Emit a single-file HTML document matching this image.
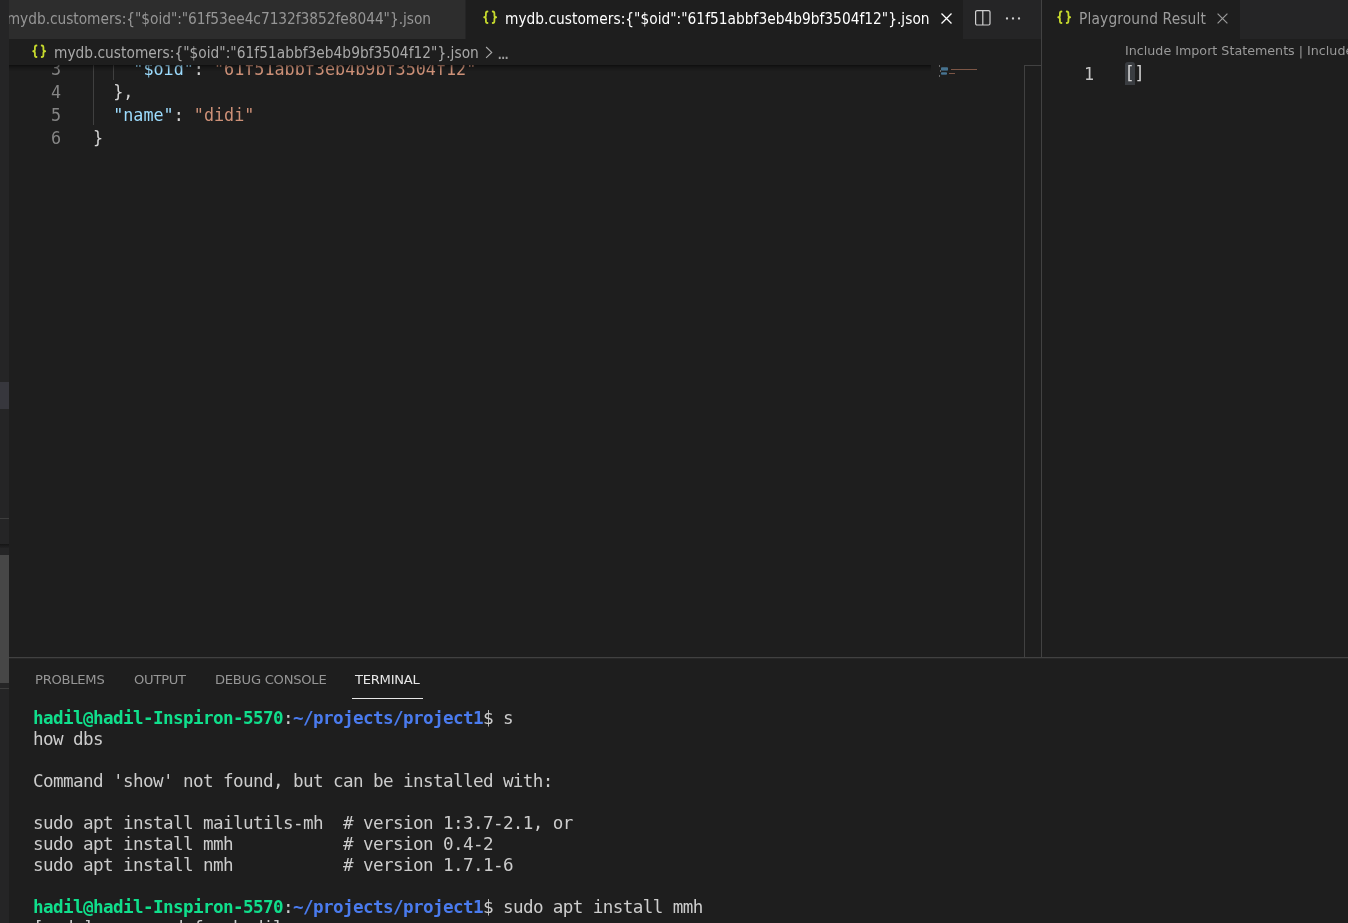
<!DOCTYPE html>
<html lang="en">
<head>
<meta charset="utf-8">
<title>mydb.customers - Visual Studio Code</title>
<style>
*{box-sizing:border-box;margin:0;padding:0}
html,body{width:1348px;height:923px;overflow:hidden;background:#1e1e1e}
body{position:relative;font-family:"DejaVu Sans Condensed","DejaVu Sans","Liberation Sans",sans-serif;font-stretch:condensed;font-size:15.3px;color:#ccc;-webkit-font-smoothing:antialiased}
.abs{position:absolute}
#root{position:absolute;left:0;top:0;width:1348px;height:923px;overflow:hidden;will-change:transform}
.ui{font-family:"DejaVu Sans Condensed","DejaVu Sans","Liberation Sans",sans-serif;font-stretch:condensed;white-space:pre}
.mono{font-family:"DejaVu Sans Mono","Liberation Mono",monospace;font-stretch:normal;white-space:pre}

/* sidebar sliver */
#side{left:0;top:0;width:9px;height:923px;background:#252526}
#side .sel{left:0;top:382px;width:9px;height:27px;background:#37373d}
#side .ln1{left:0;top:518px;width:9px;height:1px;background:#3d3d3d}
#side .shadow{left:0;top:544px;width:9px;height:4px;background:linear-gradient(#161616,#222223)}
#side .slider{left:0;top:555px;width:9px;height:128px;background:#474747}
#side .ln2{left:0;top:688px;width:9px;height:1px;background:#3d3d3d}

/* tabs group 1 */
#tabs1{left:9px;top:0;width:1032px;height:39px;background:#252526;overflow:hidden}
#tab1{left:0;top:0;width:456px;height:39px;background:#2d2d2d;overflow:hidden}
#tab1 .lbl{right:34px;top:1px;line-height:37px;color:#969696;letter-spacing:-0.032px}
#tab2{left:457px;top:0;width:497px;height:39px;background:#1e1e1e}
#tab2 .lbl{left:39px;top:1px;line-height:37px;color:#fff;letter-spacing:0.02px}
.brace{color:#cbcb41;font-weight:bold;font-stretch:normal;font-family:"DejaVu Sans Mono","Liberation Mono",monospace;white-space:pre}

/* breadcrumbs */
#crumbs{left:9px;top:39px;width:1032px;height:26px;background:#1e1e1e}
#crumbs .lbl{left:45px;top:1px;line-height:26px;color:#a9a9a9;letter-spacing:0.025px}

/* editor 1 */
#ed1{left:9px;top:65px;width:1015px;height:592px;background:#1e1e1e;overflow:hidden}
#ed1 .shadow{left:0;top:0;width:922px;height:6px;box-shadow:#000 0 6px 6px -6px inset;z-index:5}
.line{left:0;height:23px;line-height:23px;font-size:16.75px}
.num{position:absolute;left:0;width:52px;text-align:right;color:#858585}
.code{position:absolute;left:84px;color:#d4d4d4}
.k{color:#9cdcfe}.s{color:#ce9178}
.guide{width:1px;background:#404040}

#scroll1{left:1024px;top:65px;width:17px;height:592px;border-left:1px solid #414141;border-top:1px solid #414141}
#vsep{left:1041px;top:0;width:1px;height:657px;background:#424242}

/* group 2 */
#tabs2{left:1042px;top:0;width:306px;height:39px;background:#252526}
#tab3{left:0;top:0;width:198px;height:39px;background:#1e1e1e}
#tab3 .lbl{left:37px;top:1px;line-height:37px;color:#9d9d9d;letter-spacing:0.17px}
#lens{left:1125px;top:41.6px;font-family:"DejaVu Sans","Liberation Sans",sans-serif;font-stretch:normal;font-size:12.7px;line-height:18px;color:#999}

/* panel */
#panel{left:9px;top:657px;width:1339px;height:266px;border-top:1px solid #414141;box-shadow:inset 0 1px 0 #272727;background:#1e1e1e;overflow:hidden}
.ptab{top:12.5px;font-family:"DejaVu Sans","Liberation Sans",sans-serif;font-stretch:normal;font-size:13.1px;letter-spacing:-0.25px;line-height:18px;color:#969696}
.ptab.on{color:#e7e7e7}
#punder{left:343px;top:40px;width:71px;height:1px;background:#e7e7e7}
#term{left:24px;top:50px;font-size:17.6px;line-height:21px;color:#ccc;letter-spacing:-0.595px}
#term b{color:#10df8c;font-weight:bold}
#term .bl{color:#4a7bee;font-weight:bold}
</style>
</head>
<body>
<div id="root">

<div id="side" class="abs">
  <div class="abs sel"></div>
  <div class="abs ln1"></div>
  <div class="abs shadow"></div>
  <div class="abs slider"></div>
  <div class="abs ln2"></div>
</div>

<div id="tabs1" class="abs">
  <div id="tab1" class="abs"><span class="abs lbl ui" id="t1">mydb.customers:{"$oid":"61f53ee4c7132f3852fe8044"}.json</span></div>
  <div id="tab2" class="abs">
    <svg class="abs" id="b2" style="left:16px;top:10px" width="16" height="15" viewBox="0 0 16 15"><path d="M5.5 1.5 C3.9 1.5 3.9 2.6 3.9 3.6 V5.6 C3.9 6.6 3.4 7.25 2.2 7.25 C3.4 7.25 3.9 7.9 3.9 8.9 V10.9 C3.9 11.9 3.9 13 5.5 13 M10.7 1.5 C12.4 1.5 12.4 2.6 12.4 3.6 V5.6 C12.4 6.6 12.9 7.25 14.2 7.25 C12.9 7.25 12.4 7.9 12.4 8.9 V10.9 C12.4 11.9 12.4 13 10.7 13" fill="none" stroke="#c6d92d" stroke-width="1.8" stroke-linecap="round" stroke-linejoin="round"/></svg>
    <span class="abs lbl ui" id="t2">mydb.customers:{"$oid":"61f51abbf3eb4b9bf3504f12"}.json</span>
    <svg class="abs" style="left:474px;top:12px" width="13" height="13" viewBox="0 0 13 13"><path d="M1.5 1.5 L11.5 11.5 M11.5 1.5 L1.5 11.5" stroke="#fff" stroke-width="1.3" fill="none"/></svg>
  </div>
  <svg class="abs" style="left:965px;top:9px" width="18" height="18" viewBox="0 0 18 18"><rect x="1.6" y="1.6" width="14.4" height="14.4" rx="1.5" fill="none" stroke="#d0d0d0" stroke-width="1.2"/><path d="M8.8 1.6 V16" stroke="#d0d0d0" stroke-width="1.2"/></svg>
  <svg class="abs" style="left:995px;top:14px" width="18" height="8" viewBox="0 0 18 8"><circle cx="3" cy="4.5" r="1.15" fill="#d0d0d0"/><circle cx="9" cy="4.5" r="1.15" fill="#d0d0d0"/><circle cx="15" cy="4.5" r="1.15" fill="#d0d0d0"/></svg>
</div>

<div id="crumbs" class="abs">
  <svg class="abs" id="b1" style="left:22px;top:5.2px" width="16" height="15" viewBox="0 0 16 15"><path d="M5.5 1.5 C3.9 1.5 3.9 2.6 3.9 3.6 V5.6 C3.9 6.6 3.4 7.25 2.2 7.25 C3.4 7.25 3.9 7.9 3.9 8.9 V10.9 C3.9 11.9 3.9 13 5.5 13 M10.7 1.5 C12.4 1.5 12.4 2.6 12.4 3.6 V5.6 C12.4 6.6 12.9 7.25 14.2 7.25 C12.9 7.25 12.4 7.9 12.4 8.9 V10.9 C12.4 11.9 12.4 13 10.7 13" fill="none" stroke="#c6d92d" stroke-width="1.8" stroke-linecap="round" stroke-linejoin="round"/></svg>
  <span class="abs lbl ui" id="c1">mydb.customers:{"$oid":"61f51abbf3eb4b9bf3504f12"}.json</span>
  <svg class="abs" style="left:475px;top:6px" width="10" height="15" viewBox="0 0 10 15"><path d="M2.1 2 L7.7 7.4 L2.1 12.8" stroke="#a9a9a9" stroke-width="1.15" fill="none"/></svg>
  <span class="abs ui" style="left:489px;top:3px;line-height:26px;font-size:12.5px;color:#a0a0a0;font-weight:bold;transform:scaleX(0.92);transform-origin:0 50%">…</span>
</div>

<div id="ed1" class="abs">
  <div class="abs shadow"></div>
  <div class="abs guide" style="left:84px;top:0;height:60px"></div>
  <div class="abs guide" style="left:104px;top:0;height:15px"></div>
  <div class="abs line mono" style="top:-7px"><span class="num">3</span><span class="code">    <span class="k">"$oid"</span>: <span class="s">"61f51abbf3eb4b9bf3504f12"</span></span></div>
  <div class="abs line mono" style="top:16px"><span class="num">4</span><span class="code">  },</span></div>
  <div class="abs line mono" style="top:39px"><span class="num">5</span><span class="code">  <span class="k">"name"</span>: <span class="s">"didi"</span></span></div>
  <div class="abs line mono" style="top:62px"><span class="num">6</span><span class="code">}</span></div>
  <!-- minimap -->
  <div class="abs" style="left:930px;top:0;width:40px;height:14px">
    <div class="abs" style="left:0;top:0;width:1px;height:2px;background:#6a6a6a"></div>
    <div class="abs" style="left:2px;top:2px;width:7px;height:4px;background:linear-gradient(#3a5a70,#4f84a6 40%,#4f84a6 60%,#2f4656);border-radius:1px;opacity:.85"></div>
    <div class="abs" style="left:12px;top:4px;width:26px;height:1px;background:#7c5646"></div>
    <div class="abs" style="left:1px;top:5px;width:1px;height:2px;background:#6a6a6a"></div>
    <div class="abs" style="left:2px;top:7px;width:6px;height:3px;background:linear-gradient(#3a5a70,#4f84a6 50%,#35526a);border-radius:1px;opacity:.85"></div>
    <div class="abs" style="left:10px;top:8px;width:6px;height:1px;background:#7c5646"></div>
    <div class="abs" style="left:0;top:10px;width:1px;height:2px;background:#6a6a6a"></div>
  </div>
</div>
<div id="scroll1" class="abs"></div>
<div id="vsep" class="abs"></div>

<div id="tabs2" class="abs">
  <div id="tab3" class="abs">
    <svg class="abs" id="b3" style="left:14px;top:10px" width="16" height="15" viewBox="0 0 16 15"><path d="M5.5 1.5 C3.9 1.5 3.9 2.6 3.9 3.6 V5.6 C3.9 6.6 3.4 7.25 2.2 7.25 C3.4 7.25 3.9 7.9 3.9 8.9 V10.9 C3.9 11.9 3.9 13 5.5 13 M10.7 1.5 C12.4 1.5 12.4 2.6 12.4 3.6 V5.6 C12.4 6.6 12.9 7.25 14.2 7.25 C12.9 7.25 12.4 7.9 12.4 8.9 V10.9 C12.4 11.9 12.4 13 10.7 13" fill="none" stroke="#c6d92d" stroke-width="1.8" stroke-linecap="round" stroke-linejoin="round"/></svg>
    <span class="abs lbl ui" id="t3">Playground Result</span>
    <svg class="abs" style="left:174px;top:12px" width="13" height="13" viewBox="0 0 13 13"><path d="M1.6 1.6 L11.4 11.4 M11.4 1.6 L1.6 11.4" stroke="#9a9a9a" stroke-width="1.2" fill="none"/></svg>
  </div>
</div>
<div id="lens" class="abs ui"><span id="l1">Include Import Statements</span> | <span id="l2">Include Driver Syntax</span></div>
<div class="abs mono" style="left:1042px;top:62px;width:306px;height:23px;line-height:23px;font-size:16.75px"><span class="abs" style="left:0;top:1px;width:52px;text-align:right;color:#c6c6c6">1</span><span class="abs" style="left:83px;top:0;width:10px;height:23px;background:#3a3d41;border-radius:3px 3px 0 0"></span><span class="abs" style="left:82.5px;color:#d4d4d4">[]</span></div>

<div id="panel" class="abs">
  <span class="abs ptab ui" style="left:26px">PROBLEMS</span>
  <span class="abs ptab ui" style="left:125px">OUTPUT</span>
  <span class="abs ptab ui" style="left:206px">DEBUG CONSOLE</span>
  <span class="abs ptab ui on" style="left:346px">TERMINAL</span>
  <div id="punder" class="abs"></div>
<div id="term" class="abs mono"><b>hadil@hadil-Inspiron-5570</b>:<span class="bl">~/projects/project1</span>$ s
how dbs

Command 'show' not found, but can be installed with:

sudo apt install mailutils-mh  # version 1:3.7-2.1, or
sudo apt install mmh           # version 0.4-2
sudo apt install nmh           # version 1.7.1-6

<b>hadil@hadil-Inspiron-5570</b>:<span class="bl">~/projects/project1</span>$ sudo apt install mmh
[sudo] password for hadil: </div>
</div>

</div>
</body>
</html>
